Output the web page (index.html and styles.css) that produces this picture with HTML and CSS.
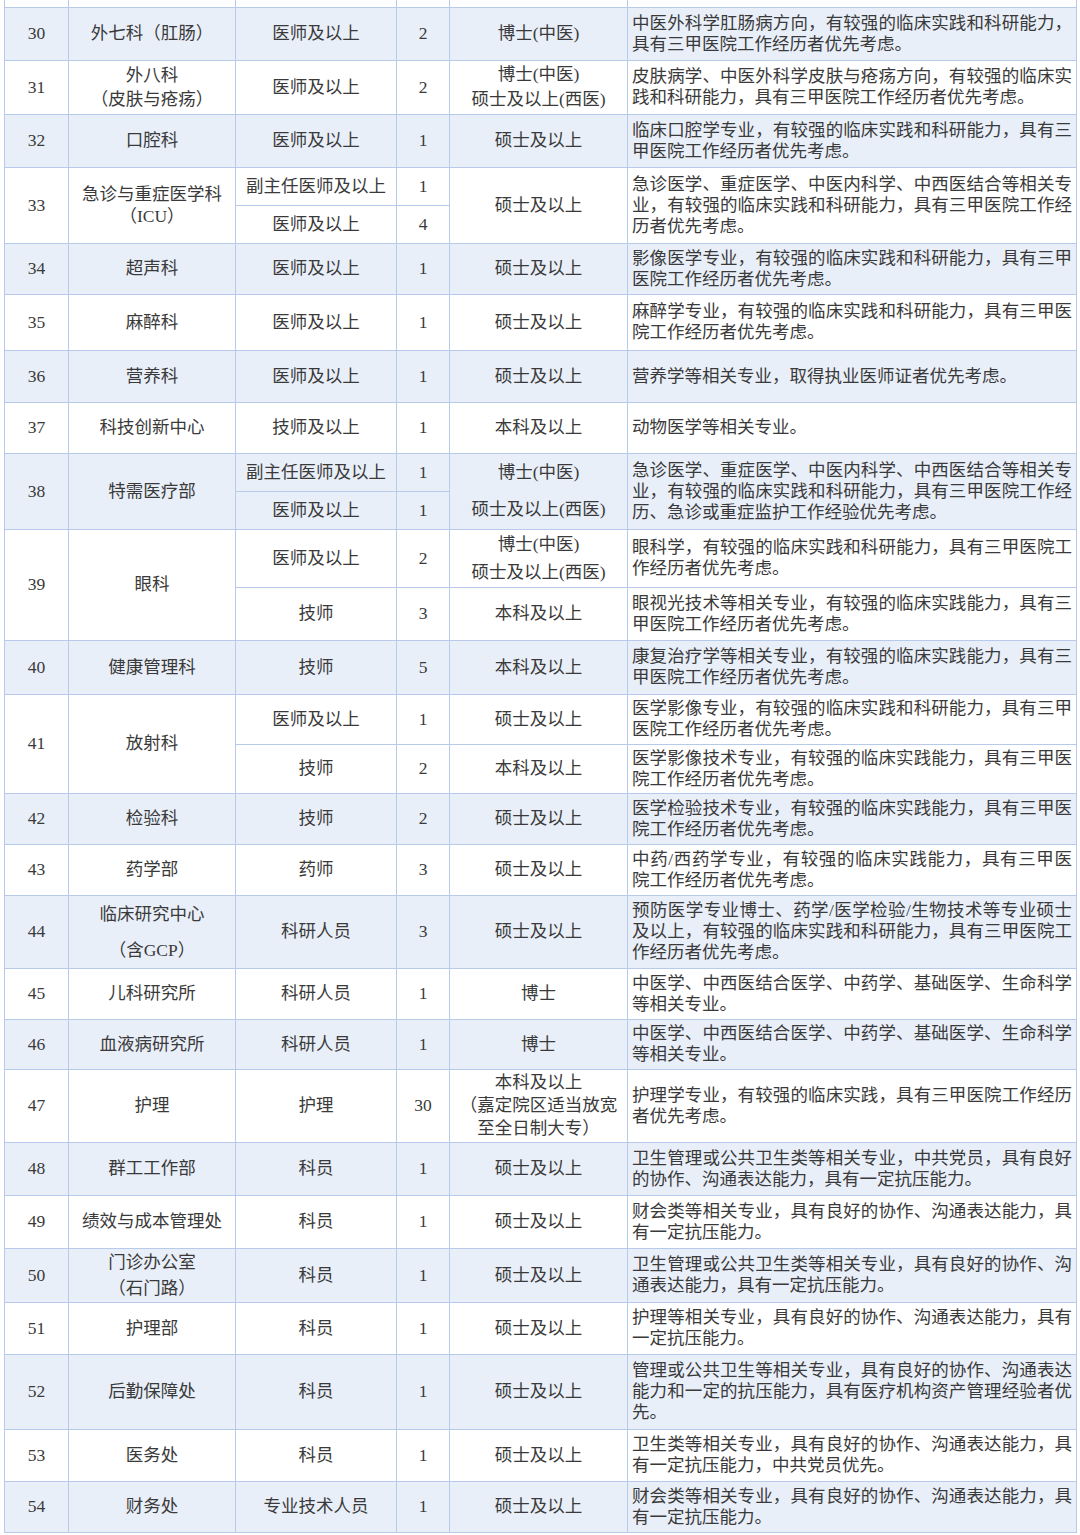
FILE: index.html
```html
<!DOCTYPE html>
<html lang="zh-CN">
<head>
<meta charset="utf-8">
<title>招聘岗位</title>
<link rel="stylesheet" href="styles.css">
</head>
<body>
<table class="jobs">
  <colgroup>
    <col class="c-no"><col class="c-dept"><col class="c-post"><col class="c-num"><col class="c-edu"><col class="c-req">
  </colgroup>
  <tbody class="first">
    <tr class="h6"><td></td><td></td><td></td><td></td><td></td><td></td></tr>
  </tbody>
  <tbody class="alt">
    <tr class="h53"><td>30</td><td>外七科（肛肠）</td><td>医师及以上</td><td>2</td><td>博士(中医)</td><td class="req">中医外科学肛肠病方向，有较强的临床实践和科研能力，具有三甲医院工作经历者优先考虑。</td></tr>
  </tbody>
  <tbody>
    <tr class="h54"><td>31</td><td class="lh24">外八科<br>（皮肤与疮疡）</td><td>医师及以上</td><td>2</td><td class="lh25">博士(中医)<br>硕士及以上(西医)</td><td class="req">皮肤病学、中医外科学皮肤与疮疡方向，有较强的临床实践和科研能力，具有三甲医院工作经历者优先考虑。</td></tr>
  </tbody>
  <tbody class="alt">
    <tr class="h53"><td>32</td><td>口腔科</td><td>医师及以上</td><td>1</td><td>硕士及以上</td><td class="req">临床口腔学专业，有较强的临床实践和科研能力，具有三甲医院工作经历者优先考虑。</td></tr>
  </tbody>
  <tbody>
    <tr class="h38"><td rowspan="2">33</td><td rowspan="2" class="lh22">急诊与重症医学科<br>（ICU）</td><td>副主任医师及以上</td><td>1</td><td rowspan="2">硕士及以上</td><td rowspan="2" class="req">急诊医学、重症医学、中医内科学、中西医结合等相关专业，有较强的临床实践和科研能力，具有三甲医院工作经历者优先考虑。</td></tr>
    <tr class="h38"><td>医师及以上</td><td>4</td></tr>
  </tbody>
  <tbody class="alt">
    <tr class="h51"><td>34</td><td>超声科</td><td>医师及以上</td><td>1</td><td>硕士及以上</td><td class="req">影像医学专业，有较强的临床实践和科研能力，具有三甲医院工作经历者优先考虑。</td></tr>
  </tbody>
  <tbody>
    <tr class="h56"><td>35</td><td>麻醉科</td><td>医师及以上</td><td>1</td><td>硕士及以上</td><td class="req">麻醉学专业，有较强的临床实践和科研能力，具有三甲医院工作经历者优先考虑。</td></tr>
  </tbody>
  <tbody class="alt">
    <tr class="h52"><td>36</td><td>营养科</td><td>医师及以上</td><td>1</td><td>硕士及以上</td><td class="req">营养学等相关专业，取得执业医师证者优先考虑。</td></tr>
  </tbody>
  <tbody>
    <tr class="h51"><td>37</td><td>科技创新中心</td><td>技师及以上</td><td>1</td><td>本科及以上</td><td class="req">动物医学等相关专业。</td></tr>
  </tbody>
  <tbody class="alt">
    <tr class="h38"><td rowspan="2">38</td><td rowspan="2">特需医疗部</td><td>副主任医师及以上</td><td>1</td><td rowspan="2" class="lh37">博士(中医)<br>硕士及以上(西医)</td><td rowspan="2" class="req">急诊医学、重症医学、中医内科学、中西医结合等相关专业，有较强的临床实践和科研能力，具有三甲医院工作经历、急诊或重症监护工作经验优先考虑。</td></tr>
    <tr class="h38"><td>医师及以上</td><td>1</td></tr>
  </tbody>
  <tbody>
    <tr class="h58"><td rowspan="2">39</td><td rowspan="2">眼科</td><td>医师及以上</td><td>2</td><td class="lh28">博士(中医)<br>硕士及以上(西医)</td><td class="req">眼科学，有较强的临床实践和科研能力，具有三甲医院工作经历者优先考虑。</td></tr>
    <tr class="h53"><td>技师</td><td>3</td><td>本科及以上</td><td class="req">眼视光技术等相关专业，有较强的临床实践能力，具有三甲医院工作经历者优先考虑。</td></tr>
  </tbody>
  <tbody class="alt">
    <tr class="h54"><td>40</td><td>健康管理科</td><td>技师</td><td>5</td><td>本科及以上</td><td class="req">康复治疗学等相关专业，有较强的临床实践能力，具有三甲医院工作经历者优先考虑。</td></tr>
  </tbody>
  <tbody>
    <tr class="h50"><td rowspan="2">41</td><td rowspan="2">放射科</td><td>医师及以上</td><td>1</td><td>硕士及以上</td><td class="req">医学影像专业，有较强的临床实践和科研能力，具有三甲医院工作经历者优先考虑。</td></tr>
    <tr class="h49"><td>技师</td><td>2</td><td>本科及以上</td><td class="req">医学影像技术专业，有较强的临床实践能力，具有三甲医院工作经历者优先考虑。</td></tr>
  </tbody>
  <tbody class="alt">
    <tr class="h51"><td>42</td><td>检验科</td><td>技师</td><td>2</td><td>硕士及以上</td><td class="req">医学检验技术专业，有较强的临床实践能力，具有三甲医院工作经历者优先考虑。</td></tr>
  </tbody>
  <tbody>
    <tr class="h51"><td>43</td><td>药学部</td><td>药师</td><td>3</td><td>硕士及以上</td><td class="req">中药/西药学专业，有较强的临床实践能力，具有三甲医院工作经历者优先考虑。</td></tr>
  </tbody>
  <tbody class="alt">
    <tr class="h73"><td>44</td><td class="lh36">临床研究中心<br>（含GCP）</td><td>科研人员</td><td>3</td><td>硕士及以上</td><td class="req">预防医学专业博士、药学/医学检验/生物技术等专业硕士及以上，有较强的临床实践和科研能力，具有三甲医院工作经历者优先考虑。</td></tr>
  </tbody>
  <tbody>
    <tr class="h51"><td>45</td><td>儿科研究所</td><td>科研人员</td><td>1</td><td>博士</td><td class="req">中医学、中西医结合医学、中药学、基础医学、生命科学等相关专业。</td></tr>
  </tbody>
  <tbody class="alt">
    <tr class="h50"><td>46</td><td>血液病研究所</td><td>科研人员</td><td>1</td><td>博士</td><td class="req">中医学、中西医结合医学、中药学、基础医学、生命科学等相关专业。</td></tr>
  </tbody>
  <tbody>
    <tr class="h73"><td>47</td><td>护理</td><td>护理</td><td>30</td><td class="lh23">本科及以上<br>（嘉定院区适当放宽<br>至全日制大专）</td><td class="req">护理学专业，有较强的临床实践，具有三甲医院工作经历者优先考虑。</td></tr>
  </tbody>
  <tbody class="alt">
    <tr class="h53"><td>48</td><td>群工工作部</td><td>科员</td><td>1</td><td>硕士及以上</td><td class="req">卫生管理或公共卫生类等相关专业，中共党员，具有良好的协作、沟通表达能力，具有一定抗压能力。</td></tr>
  </tbody>
  <tbody>
    <tr class="h53"><td>49</td><td>绩效与成本管理处</td><td>科员</td><td>1</td><td>硕士及以上</td><td class="req">财会类等相关专业，具有良好的协作、沟通表达能力，具有一定抗压能力。</td></tr>
  </tbody>
  <tbody class="alt">
    <tr class="h54"><td>50</td><td class="lh26">门诊办公室<br>（石门路）</td><td>科员</td><td>1</td><td>硕士及以上</td><td class="req">卫生管理或公共卫生类等相关专业，具有良好的协作、沟通表达能力，具有一定抗压能力。</td></tr>
  </tbody>
  <tbody>
    <tr class="h52"><td>51</td><td>护理部</td><td>科员</td><td>1</td><td>硕士及以上</td><td class="req">护理等相关专业，具有良好的协作、沟通表达能力，具有一定抗压能力。</td></tr>
  </tbody>
  <tbody class="alt">
    <tr class="h75"><td>52</td><td>后勤保障处</td><td>科员</td><td>1</td><td>硕士及以上</td><td class="req">管理或公共卫生等相关专业，具有良好的协作、沟通表达能力和一定的抗压能力，具有医疗机构资产管理经验者优先。</td></tr>
  </tbody>
  <tbody>
    <tr class="h52"><td>53</td><td>医务处</td><td>科员</td><td>1</td><td>硕士及以上</td><td class="req">卫生类等相关专业，具有良好的协作、沟通表达能力，具有一定抗压能力，中共党员优先。</td></tr>
  </tbody>
  <tbody class="alt">
    <tr class="h51"><td>54</td><td>财务处</td><td>专业技术人员</td><td>1</td><td>硕士及以上</td><td class="req">财会类等相关专业，具有良好的协作、沟通表达能力，具有一定抗压能力。</td></tr>
  </tbody>
</table>
</body>
</html>
```

FILE: styles.css
```css
html, body {
  margin: 0;
  padding: 0;
  background: #ffffff;
}

body {
  font-family: "Liberation Serif", "Noto Sans CJK SC", serif;
  font-size: 17.5px;
  color: #3a3a3a;
}

.jobs {
  border-collapse: collapse;
  table-layout: fixed;
  width: 1072px;
  margin-left: 4px;
}

.c-no { width: 64px; }
.c-dept { width: 167px; }
.c-post { width: 161px; }
.c-num { width: 53px; }
.c-edu { width: 178px; }
.c-req { width: 449px; }

.jobs td {
  border: 1px solid #b8cae9;
  padding: 0 2px;
  text-align: center;
  vertical-align: middle;
  line-height: 21px;
  font-weight: 400;
  overflow: hidden;
}

.jobs td.req {
  text-align: justify;
  padding: 0 4px 0 4px;
}

.jobs tbody.alt td {
  background: #e9eff9;
}

.jobs tbody.first td {
  border-top-style: hidden;
}

.h6 { height: 7px; }
.h38 { height: 38px; }
.h49 { height: 49px; }
.h50 { height: 50px; }
.h51 { height: 51px; }
.h52 { height: 52px; }
.h53 { height: 53px; }
.h54 { height: 54px; }
.h56 { height: 56px; }
.h58 { height: 58px; }
.h73 { height: 73px; }
.h75 { height: 75px; }

.jobs td.lh22 { line-height: 22px; }
.jobs td.lh23 { line-height: 23px; }
.jobs td.lh24 { line-height: 24px; }
.jobs td.lh25 { line-height: 25px; }
.jobs td.lh26 { line-height: 26px; }
.jobs td.lh28 { line-height: 28px; }
.jobs td.lh36 { line-height: 36px; }
.jobs td.lh37 { line-height: 37px; }
```
